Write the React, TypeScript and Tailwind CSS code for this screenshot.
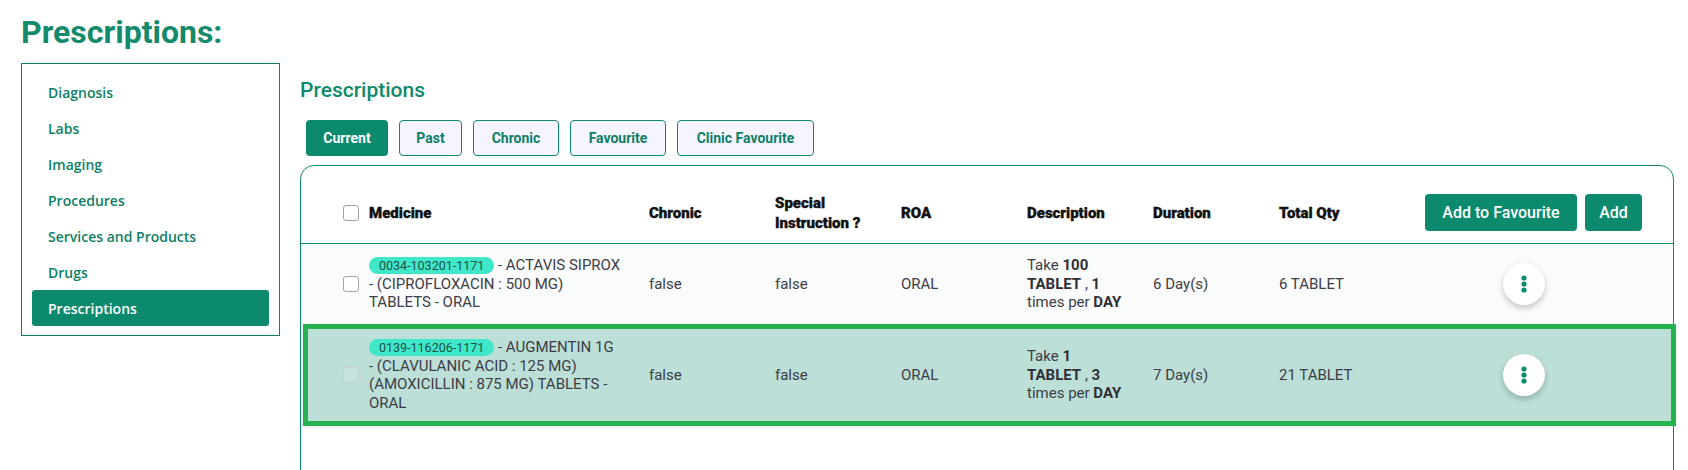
import React from "react";

const sideItems = [
  "Diagnosis",
  "Labs",
  "Imaging",
  "Procedures",
  "Services and Products",
  "Drugs",
  "Prescriptions",
];

const tabs = [
  { label: "Current", w: "w-[82px]", active: true },
  { label: "Past", w: "w-[63px]", active: false },
  { label: "Chronic", w: "w-[86px]", active: false },
  { label: "Favourite", w: "w-[96px]", active: false },
  { label: "Clinic Favourite", w: "w-[137px]", active: false },
];

const cols =
  "grid grid-cols-[26px_280px_126px_126px_126px_126px_126px_126px_1fr] items-center";

function Checkbox({ faded }: { faded?: boolean }) {
  return (
    <div
      className={
        faded
          ? "w-[16px] h-[16px] rounded-[3px] border border-[#c9cfcd] bg-[#c4e3dc]"
          : "w-[16px] h-[16px] rounded-[3px] border border-[#a3a3a3] bg-white"
      }
    />
  );
}

function Kebab() {
  return (
    <div className="justify-self-center w-[42px] h-[42px] rounded-full bg-white shadow-[0_3px_6px_rgba(0,0,0,0.22)] flex items-center justify-center">
      <svg width="6" height="18" viewBox="0 0 6 18" className="fill-[#0b8a6e]">
        <circle cx="3" cy="3" r="2.6" />
        <circle cx="3" cy="9" r="2.6" />
        <circle cx="3" cy="15" r="2.6" />
      </svg>
    </div>
  );
}

function Code({ children }: { children: React.ReactNode }) {
  return (
    <span className="inline-block rounded-full bg-[#40e8c9] px-[10px] leading-[17px] text-[12.5px] text-[#1a5248]">
      {children}
    </span>
  );
}

function Row({
  code,
  lines,
  qty,
  duration,
  desc,
  selected,
}: {
  code: string;
  lines: string[];
  qty: string;
  duration: string;
  desc: [string, string];
  selected?: boolean;
}) {
  return (
    <div
      className={
        selected
          ? `${cols} h-[102px] ml-[2px] -mr-[3px] border-[5px] border-[#24b24e] bg-[#bcdfd7] pl-[35px] pr-[29px] shadow-[0_2px_4px_rgba(0,0,0,0.08)]`
          : `${cols} h-[80px] bg-[#fafcfb] pl-[42px] pr-[31px]`
      }
    >
      <Checkbox faded={selected} />
      <div className="leading-[18.5px] pr-[20px]">
        <div>
          <Code>{code}</Code> {lines[0]}
        </div>
        {lines.slice(1).map((l) => (
          <div key={l}>{l}</div>
        ))}
      </div>
      <div>false</div>
      <div>false</div>
      <div>ORAL</div>
      <div className="leading-[18.5px]">
        <div>
          Take <b className="text-[#2f2f38]">{desc[0]}</b>
        </div>
        <div>
          <b className="text-[#2f2f38]">TABLET</b> , <b className="text-[#2f2f38]">{desc[1]}</b>
        </div>
        <div>
          times per <b className="text-[#2f2f38]">DAY</b>
        </div>
      </div>
      <div>{duration}</div>
      <div>{qty}</div>
      <Kebab />
    </div>
  );
}

export default function App() {
  return (
    <div className="min-h-[470px] bg-white pl-[21px] pr-[14px] pt-[14px] font-['Roboto',sans-serif]">
      <h1 className="text-[32px] leading-[37px] font-bold text-[#148a6c]">Prescriptions:</h1>
      <div className="mt-[12px] flex items-start gap-[20px]">
        {/* Side navigation */}
        <nav className="w-[259px] shrink-0 border border-[#0e7f65] px-[10px] pt-[10px] pb-[9px] font-['Open_Sans',sans-serif]">
          {sideItems.map((item) => (
            <div
              key={item}
              className={
                item === "Prescriptions"
                  ? "h-[36px] flex items-center pl-[16px] rounded-[3px] bg-[#0b8a6e] text-white text-[14px] font-semibold"
                  : "h-[36px] flex items-center pl-[16px] text-[#0e7f65] text-[14px] font-semibold"
              }
            >
              {item}
            </div>
          ))}
        </nav>

        <section className="flex-1">
          <h2 className="mt-[13px] text-[21px] leading-[28px] font-medium text-[#0f8a6d]">Prescriptions</h2>
          {/* Tabs */}
          <div className="mt-[16px] ml-[6px] flex gap-[11px]">
            {tabs.map((t) => (
              <button
                key={t.label}
                className={
                  t.active
                    ? `${t.w} h-[36px] rounded-[4px] bg-[#0b8a6e] text-white text-[14px] font-bold`
                    : `${t.w} h-[36px] rounded-[4px] border border-[#0e8a6e] bg-[#f6f4fe] text-[#0e7f66] text-[14px] font-bold`
                }
              >
                {t.label}
              </button>
            ))}
          </div>

          {/* Table card */}
          <div className="mt-[9px] min-h-[320px] rounded-t-[14px] border border-[#0e8a6e] text-[15px] text-[#3d3d48]">
            <div className={`${cols} h-[78px] pt-[16px] border-b border-[#0e8a6e] pl-[42px] pr-[31px] text-[15px] font-black text-[#111] leading-[20px]`}>
              <Checkbox />
              <div className="[-webkit-text-stroke:0.35px_#111]">Medicine</div>
              <div className="[-webkit-text-stroke:0.35px_#111]">Chronic</div>
              <div className="[-webkit-text-stroke:0.35px_#111]">
                Special
                <br />
                Instruction ?
              </div>
              <div className="[-webkit-text-stroke:0.35px_#111]">ROA</div>
              <div className="[-webkit-text-stroke:0.35px_#111]">Description</div>
              <div className="[-webkit-text-stroke:0.35px_#111]">Duration</div>
              <div className="[-webkit-text-stroke:0.35px_#111]">Total Qty</div>
              <div className="flex justify-end gap-[8px] font-medium">
                <button className="w-[152px] h-[37px] rounded-[4px] bg-[#0b8a6e] text-white text-[16px]">
                  Add to Favourite
                </button>
                <button className="w-[57px] h-[37px] rounded-[4px] bg-[#0b8a6e] text-white text-[16px]">
                  Add
                </button>
              </div>
            </div>
            <Row
              code="0034-103201-1171"
              lines={["- ACTAVIS SIPROX", "- (CIPROFLOXACIN : 500 MG)", "TABLETS - ORAL"]}
              desc={["100", "1"]}
              duration="6 Day(s)"
              qty="6 TABLET"
            />
            <Row
              selected
              code="0139-116206-1171"
              lines={[
                "- AUGMENTIN 1G",
                "- (CLAVULANIC ACID : 125 MG)",
                "(AMOXICILLIN : 875 MG) TABLETS -",
                "ORAL",
              ]}
              desc={["1", "3"]}
              duration="7 Day(s)"
              qty="21 TABLET"
            />
          </div>
        </section>
      </div>
    </div>
  );
}
